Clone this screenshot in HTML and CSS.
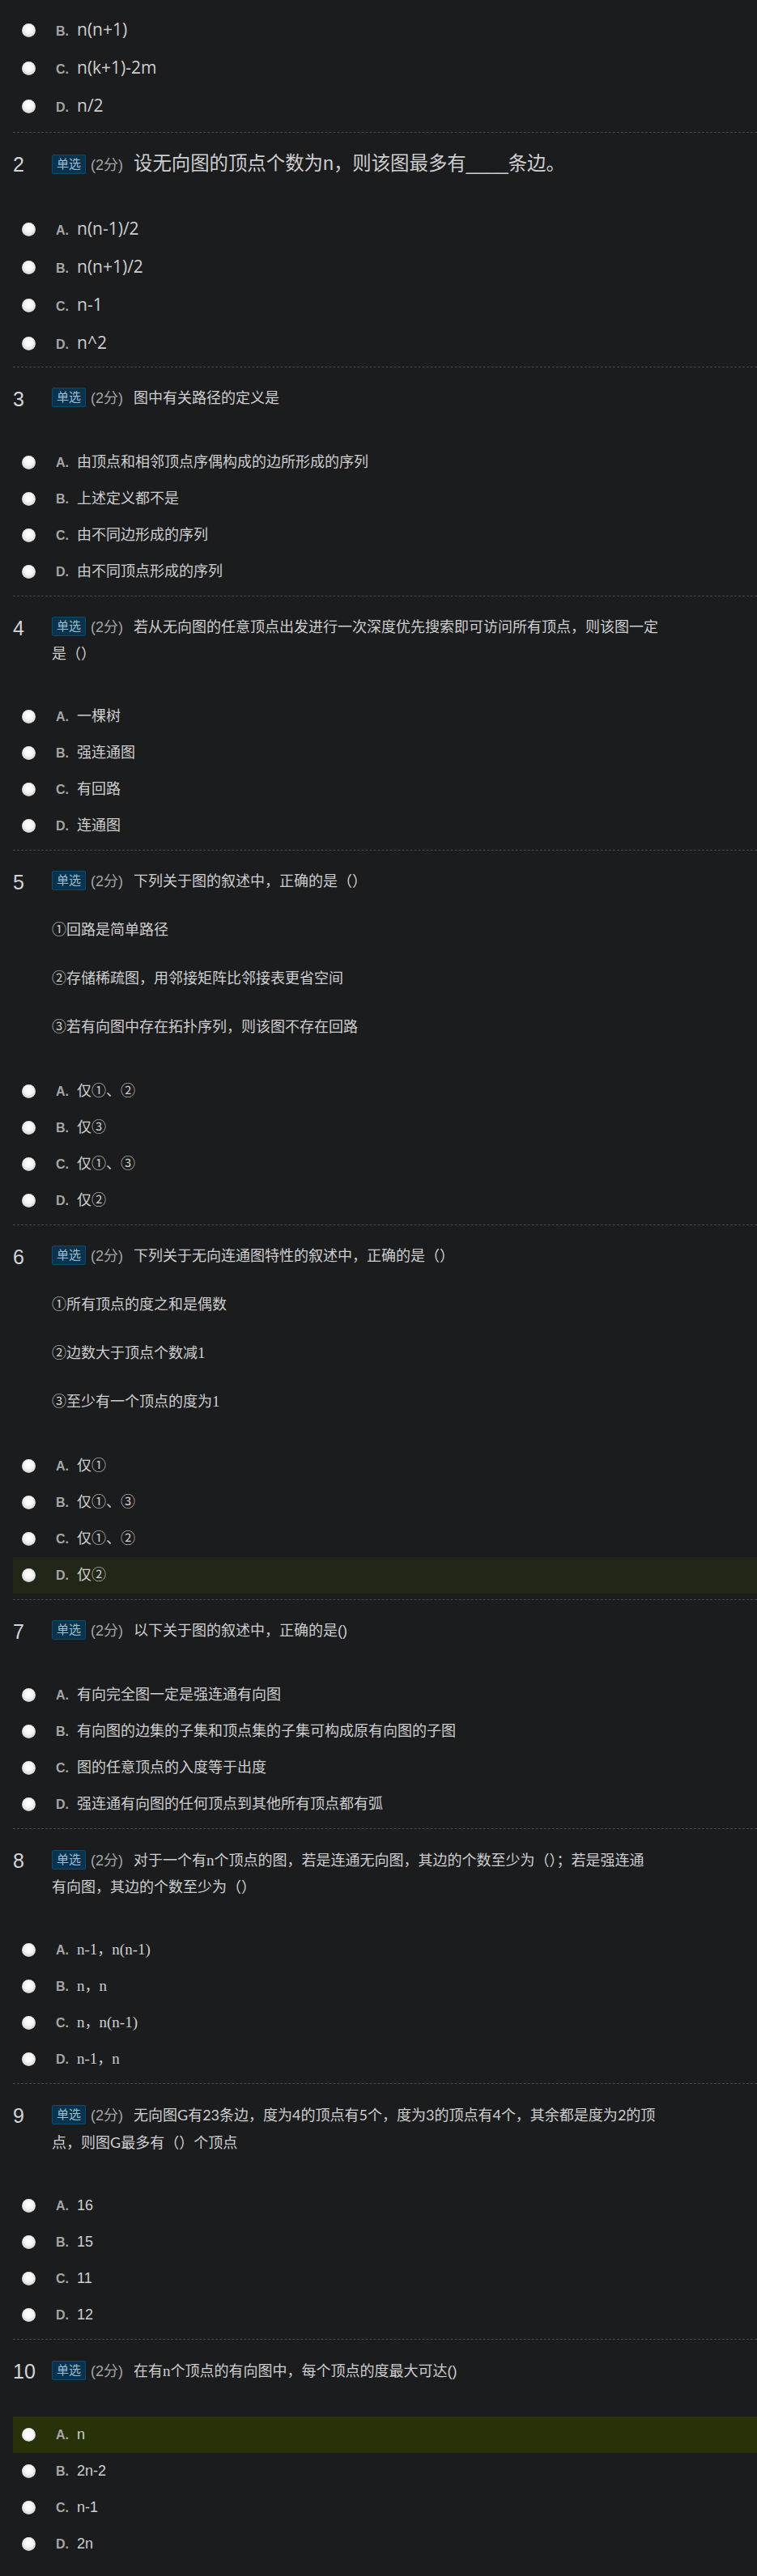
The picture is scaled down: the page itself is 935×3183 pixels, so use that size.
FILE: index.html
```html
<!DOCTYPE html>
<html lang="zh-CN">
<head>
<meta charset="utf-8">
<title>单选题</title>
<link rel="stylesheet" href="styles.css">
</head>
<body>
<main class="paper">

  <section class="question q-partial">
    <ul class="opts opts-big">
      <li class="opt"><span class="radio"></span><span class="opt-label"><span class="letter">B.</span><span class="os">n(n+1)</span></span></li>
      <li class="opt"><span class="radio"></span><span class="opt-label"><span class="letter">C.</span><span class="os">n(k+1)-2m</span></span></li>
      <li class="opt"><span class="radio"></span><span class="opt-label"><span class="letter">D.</span><span class="os">n/2</span></span></li>
    </ul>
  </section>

  <section class="question">
    <div class="q-head">
      <div class="q-num">2</div>
      <div class="q-title"><span class="badge">单选</span><span class="score">(2分)</span><span class="big">设无向图的顶点个数为n，则该图最多有____条边。</span></div>
    </div>
    <ul class="opts opts-big">
      <li class="opt"><span class="radio"></span><span class="opt-label"><span class="letter">A.</span><span class="os">n(n-1)/2</span></span></li>
      <li class="opt"><span class="radio"></span><span class="opt-label"><span class="letter">B.</span><span class="os">n(n+1)/2</span></span></li>
      <li class="opt"><span class="radio"></span><span class="opt-label"><span class="letter">C.</span><span class="os">n-1</span></span></li>
      <li class="opt"><span class="radio"></span><span class="opt-label"><span class="letter">D.</span><span class="os">n^2</span></span></li>
    </ul>
  </section>

  <section class="question">
    <div class="q-head">
      <div class="q-num">3</div>
      <div class="q-title"><span class="badge">单选</span><span class="score">(2分)</span>图中有关路径的定义是</div>
    </div>
    <ul class="opts">
      <li class="opt"><span class="radio"></span><span class="opt-label"><span class="letter">A.</span>由顶点和相邻顶点序偶构成的边所形成的序列</span></li>
      <li class="opt"><span class="radio"></span><span class="opt-label"><span class="letter">B.</span>上述定义都不是</span></li>
      <li class="opt"><span class="radio"></span><span class="opt-label"><span class="letter">C.</span>由不同边形成的序列</span></li>
      <li class="opt"><span class="radio"></span><span class="opt-label"><span class="letter">D.</span>由不同顶点形成的序列</span></li>
    </ul>
  </section>

  <section class="question">
    <div class="q-head">
      <div class="q-num">4</div>
      <div class="q-title"><span class="badge">单选</span><span class="score">(2分)</span><span class="ln">若从无向图的任意顶点出发进行一次深度优先搜索即可访问所有顶点，则该图一定</span><br><span class="ln">是（）</span></div>
    </div>
    <ul class="opts">
      <li class="opt"><span class="radio"></span><span class="opt-label"><span class="letter">A.</span>一棵树</span></li>
      <li class="opt"><span class="radio"></span><span class="opt-label"><span class="letter">B.</span>强连通图</span></li>
      <li class="opt"><span class="radio"></span><span class="opt-label"><span class="letter">C.</span>有回路</span></li>
      <li class="opt"><span class="radio"></span><span class="opt-label"><span class="letter">D.</span>连通图</span></li>
    </ul>
  </section>

  <section class="question">
    <div class="q-head">
      <div class="q-num">5</div>
      <div class="q-title"><span class="badge">单选</span><span class="score">(2分)</span>下列关于图的叙述中，正确的是（）</div>
    </div>
    <div class="stmts">
      <p>①回路是简单路径</p>
      <p>②存储稀疏图，用邻接矩阵比邻接表更省空间</p>
      <p>③若有向图中存在拓扑序列，则该图不存在回路</p>
    </div>
    <ul class="opts">
      <li class="opt"><span class="radio"></span><span class="opt-label"><span class="letter">A.</span>仅①、②</span></li>
      <li class="opt"><span class="radio"></span><span class="opt-label"><span class="letter">B.</span>仅③</span></li>
      <li class="opt"><span class="radio"></span><span class="opt-label"><span class="letter">C.</span>仅①、③</span></li>
      <li class="opt"><span class="radio"></span><span class="opt-label"><span class="letter">D.</span>仅②</span></li>
    </ul>
  </section>

  <section class="question">
    <div class="q-head">
      <div class="q-num">6</div>
      <div class="q-title"><span class="badge">单选</span><span class="score">(2分)</span>下列关于无向连通图特性的叙述中，正确的是（）</div>
    </div>
    <div class="stmts">
      <p>①所有顶点的度之和是偶数</p>
      <p>②边数大于顶点个数减<span class="serif">1</span></p>
      <p>③至少有一个顶点的度为<span class="serif">1</span></p>
    </div>
    <ul class="opts">
      <li class="opt"><span class="radio"></span><span class="opt-label"><span class="letter">A.</span>仅①</span></li>
      <li class="opt"><span class="radio"></span><span class="opt-label"><span class="letter">B.</span>仅①、③</span></li>
      <li class="opt"><span class="radio"></span><span class="opt-label"><span class="letter">C.</span>仅①、②</span></li>
      <li class="opt opt-marked"><span class="radio"></span><span class="opt-label"><span class="letter">D.</span>仅②</span></li>
    </ul>
  </section>

  <section class="question">
    <div class="q-head">
      <div class="q-num">7</div>
      <div class="q-title"><span class="badge">单选</span><span class="score">(2分)</span>以下关于图的叙述中，正确的是()</div>
    </div>
    <ul class="opts">
      <li class="opt"><span class="radio"></span><span class="opt-label"><span class="letter">A.</span>有向完全图一定是强连通有向图</span></li>
      <li class="opt"><span class="radio"></span><span class="opt-label"><span class="letter">B.</span>有向图的边集的子集和顶点集的子集可构成原有向图的子图</span></li>
      <li class="opt"><span class="radio"></span><span class="opt-label"><span class="letter">C.</span>图的任意顶点的入度等于出度</span></li>
      <li class="opt"><span class="radio"></span><span class="opt-label"><span class="letter">D.</span>强连通有向图的任何顶点到其他所有顶点都有弧</span></li>
    </ul>
  </section>

  <section class="question">
    <div class="q-head">
      <div class="q-num">8</div>
      <div class="q-title"><span class="badge">单选</span><span class="score">(2分)</span><span class="ln">对于一个有<span class="serif">n</span>个顶点的图，若是连通无向图，其边的个数至少为（）；若是强连通</span><br><span class="ln">有向图，其边的个数至少为（）</span></div>
    </div>
    <ul class="opts">
      <li class="opt"><span class="radio"></span><span class="opt-label"><span class="letter">A.</span><span class="serif">n-1</span>，<span class="serif">n(n-1)</span></span></li>
      <li class="opt"><span class="radio"></span><span class="opt-label"><span class="letter">B.</span><span class="serif">n</span>，<span class="serif">n</span></span></li>
      <li class="opt"><span class="radio"></span><span class="opt-label"><span class="letter">C.</span><span class="serif">n</span>，<span class="serif">n(n-1)</span></span></li>
      <li class="opt"><span class="radio"></span><span class="opt-label"><span class="letter">D.</span><span class="serif">n-1</span>，<span class="serif">n</span></span></li>
    </ul>
  </section>

  <section class="question">
    <div class="q-head">
      <div class="q-num">9</div>
      <div class="q-title"><span class="badge">单选</span><span class="score">(2分)</span><span class="ln">无向图<span class="cal">G</span>有<span class="cal">23</span>条边，度为<span class="cal">4</span>的顶点有<span class="cal">5</span>个，度为<span class="cal">3</span>的顶点有<span class="cal">4</span>个，其余都是度为<span class="cal">2</span>的顶</span><br><span class="ln">点，则图<span class="cal">G</span>最多有（）个顶点</span></div>
    </div>
    <ul class="opts">
      <li class="opt"><span class="radio"></span><span class="opt-label"><span class="letter">A.</span>16</span></li>
      <li class="opt"><span class="radio"></span><span class="opt-label"><span class="letter">B.</span>15</span></li>
      <li class="opt"><span class="radio"></span><span class="opt-label"><span class="letter">C.</span>11</span></li>
      <li class="opt"><span class="radio"></span><span class="opt-label"><span class="letter">D.</span>12</span></li>
    </ul>
  </section>

  <section class="question">
    <div class="q-head">
      <div class="q-num">10</div>
      <div class="q-title"><span class="badge">单选</span><span class="score">(2分)</span>在有<span class="serif">n</span>个顶点的有向图中，每个顶点的度最大可达()</div>
    </div>
    <ul class="opts">
      <li class="opt opt-correct"><span class="radio radio-on"></span><span class="opt-label"><span class="letter">A.</span>n</span></li>
      <li class="opt"><span class="radio"></span><span class="opt-label"><span class="letter">B.</span>2n-2</span></li>
      <li class="opt"><span class="radio"></span><span class="opt-label"><span class="letter">C.</span>n-1</span></li>
      <li class="opt"><span class="radio"></span><span class="opt-label"><span class="letter">D.</span>2n</span></li>
    </ul>
  </section>

</main>
</body>
</html>
```

FILE: styles.css
```css
html, body {
  margin: 0;
  padding: 0;
  background: #1b1c1e;
}

body {
  font-family: "Liberation Sans", "Noto Sans CJK SC", sans-serif;
  color: #cecece;
  min-height: 3183px;
}

.paper {
  padding: 13.5px 0 20px 16px;
}

.question {
  padding-top: 22px;
}

.question + .question {
  border-top: 1px dashed #474747;
}

.q-partial {
  padding-top: 0;
}

.q-head {
  display: flex;
  align-items: flex-start;
}

.q-num {
  flex: none;
  width: 48px;
  font-size: 25px;
  line-height: 35px;
  color: #d4d4d4;
}

.q-title {
  width: 754px;
  font-size: 18px;
  line-height: 33px;
  color: #cecece;
}

.ln {
  white-space: nowrap;
}

.badge {
  display: inline-block;
  box-sizing: border-box;
  height: 24px;
  padding: 0 5px;
  margin-right: 6px;
  border: 1px solid #0f4b6d;
  border-radius: 2px;
  background: #06334d;
  color: #a3bfcf;
  font-size: 15px;
  line-height: 22px;
  vertical-align: middle;
  position: relative;
  top: -2px;
}

.score {
  margin-right: 13px;
  font-size: 18px;
  color: #a4a4a4;
}

.big {
  font-size: 23.4px;
}

.serif {
  font-family: "Liberation Serif", "Noto Sans CJK SC", serif;
  font-size: 19px;
}

.cal {
  font-family: Lato, "Noto Sans CJK SC", sans-serif;
}

.stmts {
  margin: 25px 0 0 48px;
  font-size: 18px;
}

.stmts p {
  margin: 0;
  line-height: 32px;
}

.stmts p + p {
  margin-top: 28px;
}

.opts {
  list-style: none;
  margin: 38px 0 7px;
  padding: 0;
}

.stmts + .opts {
  margin-top: 41px;
}

.q-partial .opts {
  margin: 0 0 8px;
}

.opts-big {
  margin-top: 39px;
  margin-bottom: 5px;
}

.opt {
  display: flex;
  align-items: center;
  height: 45px;
}

.opts-big .opt {
  height: 47px;
}

.opt-marked {
  background: #212716;
}

.opt-correct {
  background: #283209;
}

.radio {
  flex: none;
  width: 17px;
  height: 17px;
  margin-left: 11px;
  border-radius: 50%;
  background: radial-gradient(circle at 50% 42%, #ffffff 0%, #f4f4f4 40%, #d2d2d2 75%, #9c9c9c 100%);
  box-shadow: 0 0 1px rgba(0, 0, 0, 0.8);
}

.radio-on {
  background: radial-gradient(circle at 50% 45%, #ffffff 0%, #f6f6f6 50%, #d8d8d8 70%, #1fb041 72%, #2fc04f 100%);
}

.opt-label {
  margin-left: 25px;
  font-size: 18px;
  line-height: 25px;
  color: #cecece;
  white-space: nowrap;
}

.letter {
  display: inline-block;
  width: 26px;
  font-size: 16px;
  font-weight: bold;
  color: #a6a6a6;
}

.os {
  font-family: "Open Sans", sans-serif;
  font-size: 21px;
}
```
